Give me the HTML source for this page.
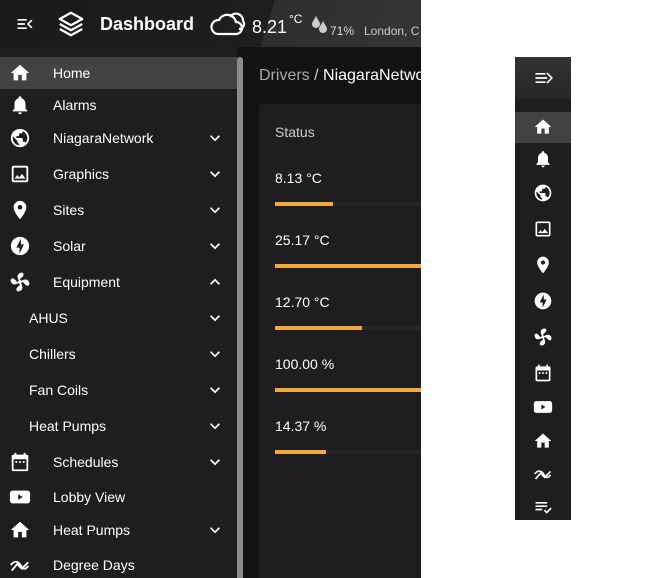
<!DOCTYPE html>
<html><head><style>
*{margin:0;padding:0;box-sizing:border-box}
body{width:650px;height:578px;background:#fff;position:relative;overflow:hidden;font-family:"Liberation Sans",sans-serif;color:#fff}
#app{position:absolute;left:0;top:0;width:421px;height:578px;background:#121212;overflow:hidden}
#hdr{position:absolute;left:0;top:0;width:421px;height:47px;background:linear-gradient(107deg,#1a1a1a 0,#1e1e1e 63%,#2e2e2e 63.3%,#353535 100%)}
#side{position:absolute;left:0;top:47px;width:237px;height:531px;background:#1e1e1e}
#sb{position:absolute;left:237px;top:57px;width:6px;height:521px;background:#8a8a8a;border-radius:3px 3px 0 0}
.row{position:absolute;left:0;width:237px;height:32px;font-size:14px;line-height:32px}
.row svg.i{position:absolute;left:9px;top:5px;width:22px;height:22px;fill:#fff}
.row span{position:absolute;left:53px}
.row.sub span{left:29px}
.row svg.c{position:absolute;left:205px;top:6px;width:20px;height:20px;fill:#fff}
#card{position:absolute;left:259px;top:104px;width:180px;height:480px;background:#1e1e1e;border-radius:4px}
.v{position:absolute;left:275px;font-size:14px}
.bar{position:absolute;left:275px;height:4px;background:#262626;width:160px}
.bar i{display:block;height:4px;background:#f5a93a}
#mini{position:absolute;left:515px;top:57px;width:56px;height:463px;background:#1e1e1e}
#mini .top{position:absolute;left:0;top:0;width:56px;height:42px;background:linear-gradient(#333,#262626)}
#mini .sel{position:absolute;left:0;top:55px;width:56px;height:31px;background:#424242}
#mini svg{position:absolute;left:18px;width:20px;height:20px;fill:#fff}
</style></head><body>
<svg width="0" height="0" style="position:absolute"><defs>
<g id="fan"><path d="M11 10.5C9 8 8 3.5 12.5 2c3.5-1 5 2.5 1.5 5-1.5 1-2 2-2 3.5z"/><path d="M11 10.5C9 8 8 3.5 12.5 2c3.5-1 5 2.5 1.5 5-1.5 1-2 2-2 3.5z" transform="rotate(90 12 12)"/><path d="M11 10.5C9 8 8 3.5 12.5 2c3.5-1 5 2.5 1.5 5-1.5 1-2 2-2 3.5z" transform="rotate(180 12 12)"/><path d="M11 10.5C9 8 8 3.5 12.5 2c3.5-1 5 2.5 1.5 5-1.5 1-2 2-2 3.5z" transform="rotate(270 12 12)"/><circle cx="12" cy="12" r="2"/></g>
</defs></svg>
<div id="app">
<div id="hdr">
<svg style="position:absolute;left:14px;top:14px" width="22" height="20" viewBox="0 0 24 24" fill="#fff"><path d="M3 6h11v2H3zM3 11h9v2H3zM3 16h11v2H3zM21 8l-4 4 4 4-1.4 1.4L14.2 12l5.4-5.4z"/></svg>
<svg style="position:absolute;left:56px;top:9px" width="30" height="30" viewBox="0 0 24 24" fill="none" stroke="#fff" stroke-width="1.8" stroke-linejoin="round"><path d="M12 3 3 8l9 5 9-5z"/><path d="M3 12l9 5 9-5"/><path d="M3 16l9 5 9-5"/></svg>
<div style="position:absolute;left:100px;top:14px;font-size:18px;font-weight:bold">Dashboard</div>
<svg style="position:absolute;left:208px;top:9px" width="40" height="28" viewBox="0 0 40 28" fill="none" stroke="#fff" stroke-width="2.2"><path d="M10 25h18a6 6 0 0 0 0-12 9 9 0 0 0-17-2 7 7 0 0 0-1 14z"/><path d="M22 8a7 7 0 0 1 13 4 5 5 0 0 1-4 8"/></svg>
<div style="position:absolute;left:252px;top:17px;font-size:18px">8.21</div>
<div style="position:absolute;left:289px;top:12px;font-size:12px">°C</div>
<svg style="position:absolute;left:311px;top:15px" width="18" height="20" viewBox="0 0 18 20" fill="#ccc"><path d="M5 1C3 5 1 7 1 9a4 4 0 0 0 8 0c0-2-2-4-4-8z"/><path d="M12 6c-2 4-4 6-4 8a4 4 0 0 0 8 0c0-2-2-4-4-8z"/></svg>
<div style="position:absolute;left:330px;top:24px;font-size:12px;color:#ddd">71%</div>
<div style="position:absolute;left:364px;top:24px;font-size:12px;color:#ccc;white-space:nowrap">London, C</div>
</div>
<div id="side">
<div class="row" style="top:10px;background:#424242"><svg class="i" viewBox="0 0 24 24"><path d="M10 20v-6h4v6h5v-8h3L12 3 2 12h3v8z"/></svg><span>Home</span></div>
<div class="row" style="top:42px"><svg class="i" viewBox="0 0 24 24"><path d="M12 22c1.1 0 2-.9 2-2h-4c0 1.1.89 2 2 2zm6-6v-5c0-3.07-1.64-5.64-4.5-6.32V4c0-.83-.67-1.5-1.5-1.5s-1.5.67-1.5 1.5v.68C7.630 5.36 6 7.92 6 11v5l-2 2v1h16v-1l-2-2z"/></svg><span>Alarms</span></div>
<div class="row" style="top:75px"><svg class="i" viewBox="0 0 24 24"><path d="M12 2C6.48 2 2 6.48 2 12s4.48 10 10 10 10-4.48 10-10S17.52 2 12 2zm-1 17.93c-3.950-.49-7-3.85-7-7.93 0-.62.08-1.21.21-1.790L9 15v1c0 1.1.9 2 2 2v1.93zm6.9-2.54c-.26-.81-1-1.39-1.9-1.39h-1v-3c0-.55-.45-1-1-1H8v-2h2c.55 0 1-.45 1-1V7h2c1.1 0 2-.9 2-2v-.41c2.93 1.19 5 4.06 5 7.410 0 2.08-.8 3.970-2.1 5.39z"/></svg><span>NiagaraNetwork</span><svg class="c" viewBox="0 0 24 24"><path d="M7.41 8.59 12 13.17l4.59-4.58L18 10l-6 6-6-6z"/></svg></div>
<div class="row" style="top:111px"><svg class="i" viewBox="0 0 24 24"><path d="M19 5v14H5V5h14m0-2H5c-1.1 0-2 .9-2 2v14c0 1.1.9 2 2 2h14c1.1 0 2-.9 2-2V5c0-1.1-.9-2-2-2zm-4.86 8.86-3 3.87L9 13.14 6 17h12z"/></svg><span>Graphics</span><svg class="c" viewBox="0 0 24 24"><path d="M7.41 8.59 12 13.17l4.59-4.58L18 10l-6 6-6-6z"/></svg></div>
<div class="row" style="top:147px"><svg class="i" viewBox="0 0 24 24"><path d="M12 2C8.13 2 5 5.13 5 9c0 5.25 7 13 7 13s7-7.75 7-13c0-3.87-3.13-7-7-7zm0 9.5a2.5 2.5 0 1 1 0-5 2.5 2.5 0 0 1 0 5z"/></svg><span>Sites</span><svg class="c" viewBox="0 0 24 24"><path d="M7.41 8.59 12 13.17l4.59-4.58L18 10l-6 6-6-6z"/></svg></div>
<div class="row" style="top:183px"><svg class="i" viewBox="0 0 24 24"><path d="M12 2.02C6.49 2.02 2.02 6.49 2.02 12s4.47 9.98 9.98 9.98 9.98-4.47 9.98-9.98S17.51 2.02 12 2.02zM11.48 20v-6.26H8L13 4v6.26h3.35z"/></svg><span>Solar</span><svg class="c" viewBox="0 0 24 24"><path d="M7.41 8.59 12 13.17l4.59-4.58L18 10l-6 6-6-6z"/></svg></div>
<div class="row" style="top:219px"><svg class="i" viewBox="0 0 24 24"><use href="#fan"/></svg><span>Equipment</span><svg class="c" viewBox="0 0 24 24"><path d="M7.41 15.41 12 10.83l4.59 4.58L18 14l-6-6-6 6z"/></svg></div>
<div class="row sub" style="top:255px"><span>AHUS</span><svg class="c" viewBox="0 0 24 24"><path d="M7.41 8.59 12 13.17l4.59-4.58L18 10l-6 6-6-6z"/></svg></div>
<div class="row sub" style="top:291px"><span>Chillers</span><svg class="c" viewBox="0 0 24 24"><path d="M7.41 8.59 12 13.17l4.59-4.58L18 10l-6 6-6-6z"/></svg></div>
<div class="row sub" style="top:327px"><span>Fan Coils</span><svg class="c" viewBox="0 0 24 24"><path d="M7.41 8.59 12 13.17l4.59-4.58L18 10l-6 6-6-6z"/></svg></div>
<div class="row sub" style="top:363px"><span>Heat Pumps</span><svg class="c" viewBox="0 0 24 24"><path d="M7.41 8.59 12 13.17l4.59-4.58L18 10l-6 6-6-6z"/></svg></div>
<div class="row" style="top:399px"><svg class="i" viewBox="0 0 24 24"><path d="M19 4h-1V2h-2v2H8V2H6v2H5a2 2 0 0 0-2 2v14a2 2 0 0 0 2 2h14a2 2 0 0 0 2-2V6a2 2 0 0 0-2-2zm0 16H5V9h14zM7 11h2v2H7zm4 0h2v2h-2zm4 0h2v2h-2z"/></svg><span>Schedules</span><svg class="c" viewBox="0 0 24 24"><path d="M7.41 8.59 12 13.17l4.59-4.58L18 10l-6 6-6-6z"/></svg></div>
<div class="row" style="top:434px"><svg class="i" viewBox="0 0 24 24"><path d="M4 5h16a3 3 0 0 1 3 3v8a3 3 0 0 1-3 3H4a3 3 0 0 1-3-3V8a3 3 0 0 1 3-3zm6 4v6l5-3z"/></svg><span>Lobby View</span></div>
<div class="row" style="top:467px"><svg class="i" viewBox="0 0 24 24"><path d="M10 20v-6h4v6h5v-8h3L12 3 2 12h3v8z"/></svg><span>Heat Pumps</span><svg class="c" viewBox="0 0 24 24"><path d="M7.41 8.59 12 13.17l4.59-4.58L18 10l-6 6-6-6z"/></svg></div>
<div class="row" style="top:502px"><svg class="i" viewBox="0 0 24 24" style="fill:none" stroke="#fff" stroke-width="2"><path d="M2 12c4-5 8-5 12 2 2 3 4 3 7-1M3 18l6-7 5 5 7-7"/></svg><span>Degree Days</span></div>
</div>
<div id="sb"></div>
<div style="position:absolute;left:259px;top:67px;font-size:16px;color:#aaa;white-space:nowrap">Drivers <span style="color:#ccc">/</span> <span style="color:#fff">NiagaraNetwork</span></div>
<div id="card"></div>
<div class="v" style="top:124px;color:#ccc">Status</div>
<div class="v" style="top:170px">8.13 °C</div><div class="bar" style="top:202px"><i style="width:58px"></i></div>
<div class="v" style="top:232px">25.17 °C</div><div class="bar" style="top:264px"><i style="width:160px"></i></div>
<div class="v" style="top:294px">12.70 °C</div><div class="bar" style="top:326px"><i style="width:87px"></i></div>
<div class="v" style="top:356px">100.00 %</div><div class="bar" style="top:388px"><i style="width:160px"></i></div>
<div class="v" style="top:418px">14.37 %</div><div class="bar" style="top:450px"><i style="width:51px"></i></div>
</div>
<div id="mini">
<div class="top"></div>
<svg style="top:11px" viewBox="0 0 24 24"><path d="M3 6h12v2H3zM3 11h14v2H3zM3 16h12v2H3zM16 6.6l1.4-1.4L24 12l-6.6 6.8-1.4-1.4 5.3-5.4z"/></svg>
<div class="sel"></div>
<svg style="top:60px" viewBox="0 0 24 24"><path d="M10 20v-6h4v6h5v-8h3L12 3 2 12h3v8z"/></svg>
<svg style="top:92px" viewBox="0 0 24 24"><path d="M12 22c1.1 0 2-.9 2-2h-4c0 1.1.89 2 2 2zm6-6v-5c0-3.07-1.64-5.64-4.5-6.32V4c0-.83-.67-1.5-1.5-1.5s-1.5.67-1.5 1.5v.68C7.63 5.36 6 7.92 6 11v5l-2 2v1h16v-1l-2-2z"/></svg>
<svg style="top:126px" viewBox="0 0 24 24"><path d="M12 2C6.48 2 2 6.48 2 12s4.48 10 10 10 10-4.48 10-10S17.52 2 12 2zm-1 17.93c-3.95-.49-7-3.85-7-7.93 0-.62.08-1.21.21-1.79L9 15v1c0 1.1.9 2 2 2v1.93zm6.9-2.54c-.26-.81-1-1.39-1.9-1.39h-1v-3c0-.55-.45-1-1-1H8v-2h2c.55 0 1-.45 1-1V7h2c1.1 0 2-.9 2-2v-.41c2.93 1.19 5 4.06 5 7.41 0 2.08-.8 3.97-2.1 5.39z"/></svg>
<svg style="top:162px" viewBox="0 0 24 24"><path d="M19 5v14H5V5h14m0-2H5c-1.1 0-2 .9-2 2v14c0 1.1.9 2 2 2h14c1.1 0 2-.9 2-2V5c0-1.1-.9-2-2-2zm-4.86 8.86-3 3.87L9 13.14 6 17h12z"/></svg>
<svg style="top:198px" viewBox="0 0 24 24"><path d="M12 2C8.13 2 5 5.13 5 9c0 5.25 7 13 7 13s7-7.75 7-13c0-3.87-3.13-7-7-7zm0 9.5a2.5 2.5 0 1 1 0-5 2.5 2.5 0 0 1 0 5z"/></svg>
<svg style="top:234px" viewBox="0 0 24 24"><path d="M12 2.02C6.49 2.02 2.02 6.49 2.02 12s4.47 9.98 9.98 9.98 9.98-4.47 9.98-9.98S17.51 2.02 12 2.02zM11.48 20v-6.26H8L13 4v6.26h3.35z"/></svg>
<svg style="top:270px" viewBox="0 0 24 24"><use href="#fan"/></svg>
<svg style="top:306px" viewBox="0 0 24 24"><path d="M19 4h-1V2h-2v2H8V2H6v2H5a2 2 0 0 0-2 2v14a2 2 0 0 0 2 2h14a2 2 0 0 0 2-2V6a2 2 0 0 0-2-2zm0 16H5V9h14zM7 11h2v2H7zm4 0h2v2h-2zm4 0h2v2h-2z"/></svg>
<svg style="top:340px" viewBox="0 0 24 24"><path d="M4 5h16a3 3 0 0 1 3 3v8a3 3 0 0 1-3 3H4a3 3 0 0 1-3-3V8a3 3 0 0 1 3-3zm6 4v6l5-3z"/></svg>
<svg style="top:374px" viewBox="0 0 24 24"><path d="M10 20v-6h4v6h5v-8h3L12 3 2 12h3v8z"/></svg>
<svg style="top:407px;fill:none" viewBox="0 0 24 24" stroke="#fff" stroke-width="2"><path d="M2 12c4-5 8-5 12 2 2 3 4 3 7-1M3 18l6-7 5 5 7-7"/></svg>
<svg style="top:440px" viewBox="0 0 24 24"><path d="M3 6h14v2H3zM3 10h14v2H3zM3 14h8v2H3zM13 16.5l1.4-1.4 2.1 2.1 4.6-4.6 1.4 1.4-6 6z"/></svg>
</div>
</body></html>
